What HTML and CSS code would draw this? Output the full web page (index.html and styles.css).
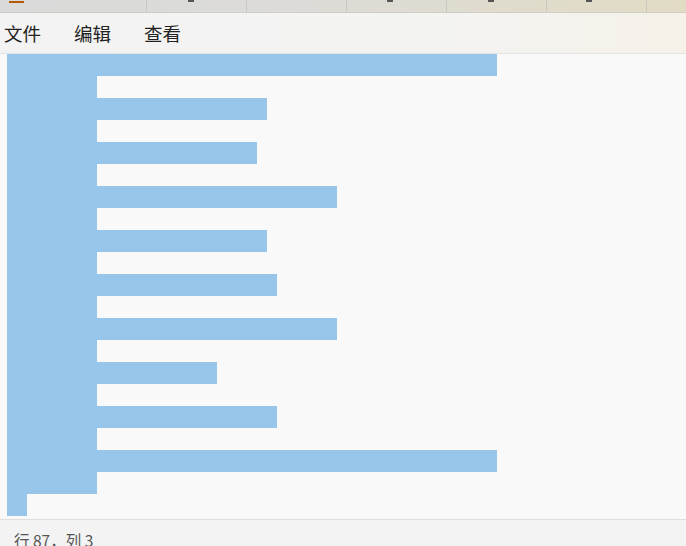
FILE: index.html
```html
<!DOCTYPE html>
<html lang="zh">
<head>
<meta charset="utf-8">
<title>编辑器</title>
<link rel="stylesheet" href="styles.css">
</head>
<body>
<div class="window">
  <div class="tabs">
    <div class="tab tab-first"><span class="tab-mark orange"></span></div>
    <div class="tab"><span class="tab-mark dark m1"></span></div>
    <div class="tab"></div>
    <div class="tab"><span class="tab-mark dark m2"></span></div>
    <div class="tab"><span class="tab-mark dark m3"></span></div>
    <div class="tab"><span class="tab-mark dark m4"></span></div>
    <div class="tab"></div>
  </div>
  <div class="menubar">
    <span class="menu-item">文件</span>
    <span class="menu-item">编辑</span>
    <span class="menu-item">查看</span>
  </div>
  <div class="editor">
    <div class="line"><span class="sel" style="width:490px"></span></div>
    <div class="line"><span class="sel" style="width:90px"></span></div>
    <div class="line"><span class="sel" style="width:260px"></span></div>
    <div class="line"><span class="sel" style="width:90px"></span></div>
    <div class="line"><span class="sel" style="width:250px"></span></div>
    <div class="line"><span class="sel" style="width:90px"></span></div>
    <div class="line"><span class="sel" style="width:330px"></span></div>
    <div class="line"><span class="sel" style="width:90px"></span></div>
    <div class="line"><span class="sel" style="width:260px"></span></div>
    <div class="line"><span class="sel" style="width:90px"></span></div>
    <div class="line"><span class="sel" style="width:270px"></span></div>
    <div class="line"><span class="sel" style="width:90px"></span></div>
    <div class="line"><span class="sel" style="width:330px"></span></div>
    <div class="line"><span class="sel" style="width:90px"></span></div>
    <div class="line"><span class="sel" style="width:210px"></span></div>
    <div class="line"><span class="sel" style="width:90px"></span></div>
    <div class="line"><span class="sel" style="width:270px"></span></div>
    <div class="line"><span class="sel" style="width:90px"></span></div>
    <div class="line"><span class="sel" style="width:490px"></span></div>
    <div class="line"><span class="sel" style="width:90px"></span></div>
    <div class="line"><span class="sel" style="width:20px"></span></div>
  </div>
  <div class="statusbar">
    <span class="status-text">行 87，列 3</span>
  </div>
</div>
</body>
</html>
```
FILE: styles.css
```css
html, body {
  margin: 0;
  padding: 0;
  width: 686px;
  height: 546px;
  overflow: hidden;
  background: #f9f9f9;
}

.window {
  display: flex;
  flex-direction: column;
  width: 686px;
  height: 546px;
  font-family: "Noto Sans CJK SC", "Noto Sans", sans-serif;
}

.tabs {
  display: flex;
  height: 12px;
  flex: 0 0 12px;
  background: linear-gradient(90deg, #dadada 0%, #dcdbd7 45%, #e2dcc4 100%);
  border-bottom: 1px solid #cfcdc6;
  overflow: hidden;
}

.tab {
  position: relative;
  flex: 0 0 100px;
  height: 12px;
  border-right: 1px solid #c9c8c4;
  box-sizing: border-box;
}

.tab-first {
  flex: 0 0 147px;
}

.tab-mark {
  position: absolute;
  top: 0;
  height: 2px;
}

.tab-mark.orange {
  left: 9px;
  width: 15px;
  top: 1px;
  background: #b55a08;
}

.tab-mark.dark {
  width: 6px;
  background: #555555;
}

.m1 { left: 41px; }
.m2 { left: 40px; }
.m3 { left: 41px; }
.m4 { left: 39px; }

.menubar {
  display: flex;
  align-items: center;
  height: 40px;
  flex: 0 0 40px;
  padding-left: 4px;
  gap: 33px;
  background: linear-gradient(90deg, #f3f3f3 0%, #f3f3f2 60%, #f6f2e9 100%);
  border-bottom: 1px solid #e3e3e1;
}

.menu-item {
  font-size: 18.5px;
  line-height: 1;
  color: #222222;
  padding-top: 0;
}

.editor {
  flex: 1 1 auto;
  display: flex;
  flex-direction: column;
  padding-left: 7px;
  background: #f9f9f9;
}

.line {
  height: 22px;
  display: flex;
}

.sel {
  display: block;
  height: 22px;
  background: #97c6ea;
}

.statusbar {
  flex: 0 0 26px;
  height: 26px;
  border-top: 1px solid #dfdfdf;
  background: #f3f3f3;
  padding-left: 14px;
  display: flex;
  align-items: flex-start;
}

.status-text {
  font-size: 15.5px;
  line-height: 1;
  color: #555555;
  padding-top: 13px;
  white-space: nowrap;
}
```
